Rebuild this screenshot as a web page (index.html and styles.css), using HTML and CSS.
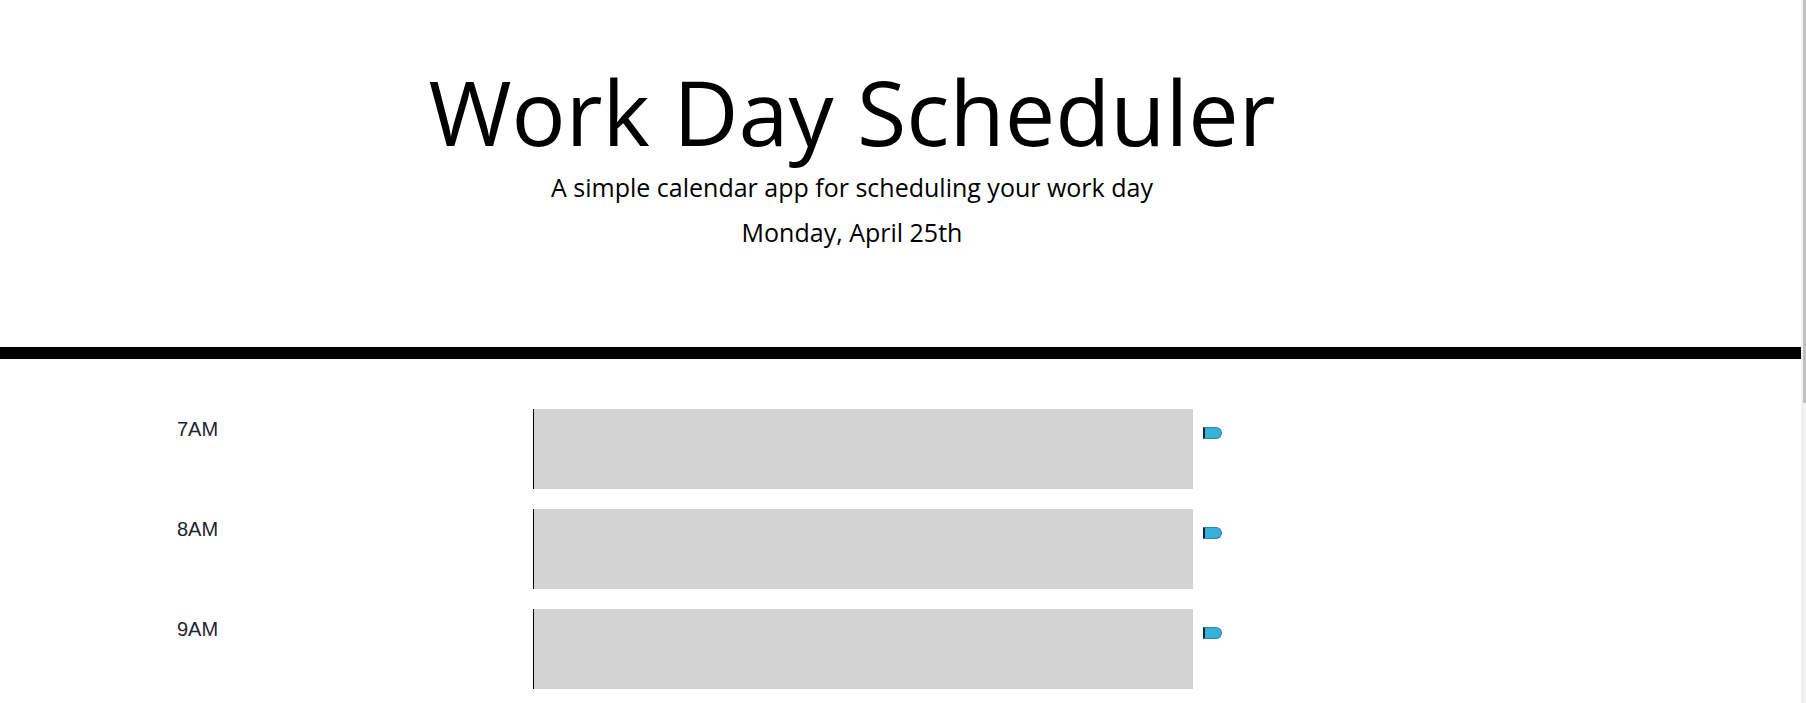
FILE: index.html
```html
<!DOCTYPE html>
<html lang="en">
<head>
<meta charset="utf-8">
<title>Work Day Scheduler</title>
<link rel="stylesheet" href="styles.css">
</head>
<body>
<header class="jumbotron">
  <h1 class="display">Work Day Scheduler</h1>
  <p class="lead">A simple calendar app for scheduling your work day</p>
  <p class="lead current-day">Monday, April 25th</p>
</header>
<main class="container">
  <div class="time-block"><div class="hour">7AM</div><textarea class="description"></textarea><button class="saveBtn" aria-label="save"></button></div>
  <div class="time-block"><div class="hour">8AM</div><textarea class="description"></textarea><button class="saveBtn" aria-label="save"></button></div>
  <div class="time-block"><div class="hour">9AM</div><textarea class="description"></textarea><button class="saveBtn" aria-label="save"></button></div>
</main>
<div class="scrollbar"><div class="scrollbar-thumb"></div></div>
</body>
</html>
```

FILE: styles.css
```css
body {
  margin: 0;
  padding-right: 5px;
  background: #ffffff;
  font-family: "Open Sans", "Liberation Sans", sans-serif;
  color: #000;
}

.scrollbar {
  position: fixed;
  top: 0;
  right: 0;
  bottom: 0;
  width: 5px;
  background: #f1f1f1;
}

.scrollbar-thumb {
  margin-left: 2px;
  width: 3px;
  height: 403px;
  background: #c1c1c1;
}

.jumbotron {
  text-align: center;
  padding: 57px 97px 95px 0;
  border-bottom: 12px solid #000;
}

.display {
  margin: 0;
  font-size: 90px;
  font-weight: 400;
  line-height: 1.2;
}

.lead {
  margin: 3.5px 0 0;
  font-size: 25px;
  line-height: 1.5;
}

.current-day {
  margin-top: 8px;
}

.container {
  padding: 50px 0 0 177px;
}

.time-block {
  display: flex;
  align-items: flex-start;
  height: 80px;
  margin-bottom: 20px;
}

.hour {
  width: 356px;
  padding-top: 9px;
  font-family: "Liberation Sans", Arial, sans-serif;
  font-size: 20px;
  line-height: 23px;
  color: #1f2330;
}

.description {
  box-sizing: border-box;
  width: 660px;
  height: 80px;
  margin: 0;
  padding: 0;
  border: none;
  border-left: 1px solid #000;
  background: #d3d3d3;
  resize: none;
}

.saveBtn {
  box-sizing: border-box;
  width: 19px;
  height: 12px;
  margin: 18px 0 0 10px;
  padding: 0;
  background: #38afd8;
  border: 1px solid #2a86a8;
  border-left: 2px solid #0d2633;
  border-radius: 0 6px 6px 0;
}
```
